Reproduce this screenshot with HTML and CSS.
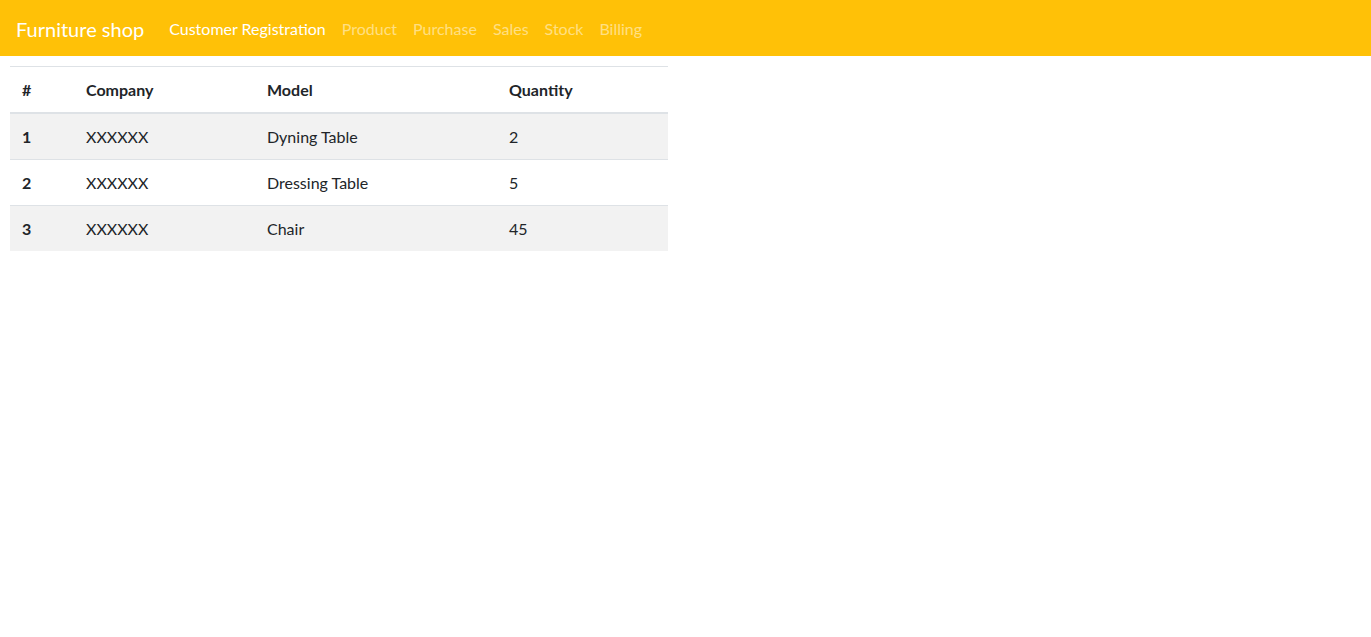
FILE: index.html
```html
<!DOCTYPE html>
<html>
<head>
<meta charset="utf-8">
<link rel="stylesheet" href="styles.css">
</head>
<body>
<nav class="navbar">
  <a class="brand" href="#">Furniture shop</a>
  <ul class="nav">
    <li><a class="nav-link active" href="#">Customer Registration</a></li>
    <li><a class="nav-link" href="#">Product</a></li>
    <li><a class="nav-link" href="#">Purchase</a></li>
    <li><a class="nav-link" href="#">Sales</a></li>
    <li><a class="nav-link" href="#">Stock</a></li>
    <li><a class="nav-link" href="#">Billing</a></li>
  </ul>
</nav>
<main class="content">
  <table class="table">
    <colgroup>
      <col class="c1"><col class="c2"><col class="c3"><col class="c4">
    </colgroup>
    <thead>
      <tr><th>#</th><th>Company</th><th>Model</th><th>Quantity</th></tr>
    </thead>
    <tbody>
      <tr><th>1</th><td>XXXXXX</td><td>Dyning Table</td><td>2</td></tr>
      <tr><th>2</th><td>XXXXXX</td><td>Dressing Table</td><td>5</td></tr>
      <tr><th>3</th><td>XXXXXX</td><td>Chair</td><td>45</td></tr>
    </tbody>
  </table>
</main>
</body>
</html>
```
FILE: styles.css
```css
* { box-sizing: border-box; }
body {
  margin: 0;
  font-family: "Lato", "Noto Sans", sans-serif;
  font-size: 16px;
  line-height: 1.5;
  color: #212529;
  background: #fff;
}
.navbar {
  display: flex;
  align-items: center;
  height: 56px;
  padding: 8px 16px;
  background: #ffc107;
}
.brand {
  font-size: 20px;
  line-height: 30px;
  color: #fff;
  text-decoration: none;
  margin-right: 17px;
  padding-top: 2px;
}
.nav {
  display: flex;
  list-style: none;
  margin: 0;
  padding: 0;
}
.nav-link {
  display: block;
  padding: 10px 8px 8px;
  color: rgba(255, 255, 255, 0.5);
  text-decoration: none;
}
.nav-link.active { color: #fff; }
.content {
  padding: 10px 10px;
}
.table {
  width: 658px;
  border-collapse: collapse;
}
.c1 { width: 64px; }
.c2 { width: 181px; }
.c3 { width: 242px; }
.c4 { width: 171px; }
.table th, .table td {
  padding: 11px 12px 10px;
  text-align: left;
  vertical-align: top;
  border-top: 1px solid #dee2e6;
}
.table th { font-weight: 700; }
.table thead th {
  border-bottom: 2px solid #dee2e6;
  padding: 11px 12px 10px;
}
.table tbody tr:nth-child(odd) { background: #f2f2f2; }
```
